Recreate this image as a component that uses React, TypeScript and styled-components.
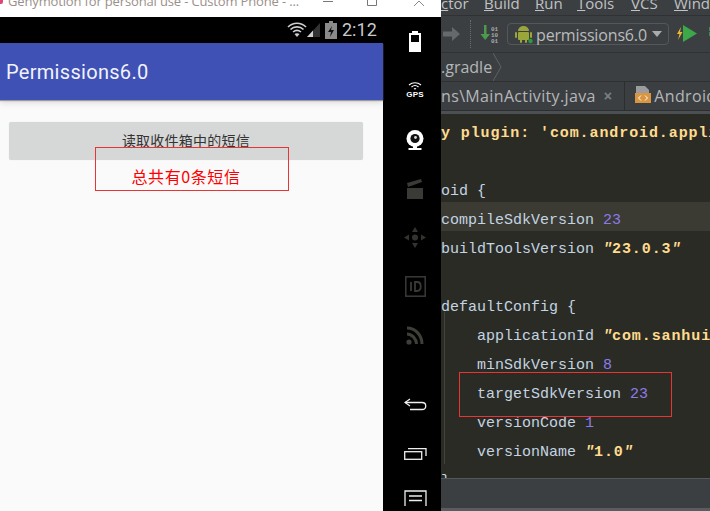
import React from "react";
import styled, { createGlobalStyle } from "styled-components";

const Global = createGlobalStyle`
  html, body { margin: 0; padding: 0; background: #000; }
  #root { width: 710px; height: 511px; overflow: hidden; }
`;
const Page = styled.div`
  position: relative; width: 710px; height: 511px; display: flex; overflow: hidden;
  font-family: Roboto, "Noto Sans CJK SC", sans-serif;
`;
const Emulator = styled.div`width: 441px; height: 511px; display: flex; flex-direction: column; flex: none;`;
const TitleBar = styled.div`
  height: 17px; background: #fff; display: flex; align-items: flex-start; overflow: hidden; flex: none;
`;
const AppMark = styled.div`width: 3px; height: 4px; background: #e0457a; flex: none; border-radius: 0 0 2px 0;`;
const TitleText = styled.div`
  font: 13px/13px "Open Sans", sans-serif; color: #9a8f8a; letter-spacing: -.15px;
  margin: -5px 0 0 5px; white-space: nowrap; width: 300px; flex: none;
`;
const WinButtons = styled.div`display: flex; height: 17px; align-items: flex-start; flex: none;`;
const WinBtn = styled.div<{ $w: number }>`width: ${p => p.$w}px; display: flex; justify-content: center; flex: none;`;
const EmuBody = styled.div`flex: 1; display: flex; min-height: 0;`;
const Phone = styled.div`width: 383px; display: flex; flex-direction: column; background: #fafafa; flex: none;`;
const StatusBar = styled.div`
  height: 26px; background: #000; display: flex; justify-content: flex-end; align-items: center; padding-right: 6px; flex: none;
`;
const Clock = styled.div`font: 18px/26px Roboto, sans-serif; color: #c9c9c9; margin-left: 5px; letter-spacing: .1px;`;
const AppBar = styled.div`
  height: 57px; background: #3f51b5; color: #f2f3fa; font: 20px/59px Roboto, sans-serif; padding-left: 6px; letter-spacing: .3px;
  box-shadow: 0 1px 1px #9c9c9c, 0 3px 6px rgba(0,0,0,.12); flex: none; position: relative;
`;
const Content = styled.div`flex: 1; display: flex; flex-direction: column; padding: 22px 20px 0 9px;`;
const ActionButton = styled.div`
  height: 38px; background: #d6d7d7; border-radius: 2px; box-shadow: 0 0 1px #ddd; color: #333; letter-spacing: .25px;
  font: 14px/36px "Noto Sans CJK SC", sans-serif; text-align: center;
`;
const Count = styled.div`
  margin-top: 4px; color: #f00; font: 400 16px/24px "Noto Sans CJK SC", sans-serif; text-align: center; letter-spacing: .6px;
`;
const Nav = styled.div`width: 58px; background: #000; display: flex; flex-direction: column; flex: none;`;
const NavSlot = styled.div`height: 49px; width: 100%; flex: none; display: flex; align-items: center; justify-content: center; padding-left: 6px; box-sizing: border-box;`;
const NavMenuSlot = styled(NavSlot)`align-items: flex-start; padding-top: 12px;`;
const NavGap = styled.div`height: 20px; flex: none;`;
const GpsLabel = styled.div`font: 700 8px/8px "Liberation Sans", sans-serif; color: #fff; letter-spacing: .2px; text-align: center;`;
const GpsWrap = styled.div`display: flex; flex-direction: column; align-items: center; gap: 1px;`;

const Ide = styled.div`flex: 1; display: flex; flex-direction: column; background: #3c3f41; min-width: 0;`;
const Menu = styled.div`
  height: 15px; overflow: hidden; display: flex; flex: none; border-bottom: 1px solid #2f3133; color: #c0c2c4;
  font: 15px/15px "Open Sans", sans-serif; align-items: flex-end; white-space: nowrap;
`;
const MenuItem = styled.div<{ $w: number }>`width: ${p => p.$w}px; flex: none; margin-bottom: 4px; &::first-letter { text-decoration: underline; }`;
const Toolbar = styled.div`height: 36px; flex: none; display: flex; align-items: center; border-bottom: 1px solid #303234; overflow: hidden; & > * { flex: none; }`;
const Dotted = styled.div`width: 0; height: 28px; border-left: 1px dotted #6a6c6e; margin: 0 9px 0 9px;`;
const RunConfig = styled.div`
  width: 162px; height: 22px; box-sizing: border-box; border: 1px solid #55585a; border-radius: 4px; margin-left: 6px;
  display: flex; align-items: center; padding-left: 6px; color: #b8bbbd; font: 16px/22px "Open Sans", sans-serif;
`;
const RunLabel = styled.span`margin-left: 2px; flex: 1; letter-spacing: -.15px; white-space: nowrap; padding-top: 1px;`;
const Caret = styled.span`width: 0; height: 0; border: 5px solid transparent; border-top: 6px solid #a9acae; border-bottom: 0; margin-right: 6px;`;
const Crumbs = styled.div`
  height: 28px; flex: none; display: flex; align-items: center; color: #b4b7b9; border-bottom: 1px solid #2e3032;
  font: 16px/28px "Open Sans", sans-serif; overflow: hidden;
`;
const Tabs = styled.div`
  height: 28px; flex: none; display: flex; align-items: center; color: #b4b7b9; border-bottom: 1px solid #2c2e30;
  font: 16px/28px "Open Sans", sans-serif; overflow: hidden; white-space: nowrap; letter-spacing: .35px;
  & > * { flex: none; }
`;
const TabClose = styled.span`color: #7d8082; font: 700 14px/28px "Liberation Sans", sans-serif; margin: 0 12px 0 8px;`;
const TabSep = styled.div`width: 1px; height: 28px; background: #2c2e30; margin-right: 10px;`;
const Strip = styled.div`height: 3px; background: #4d5052; flex: none;`;
const Editor = styled.div`
  flex: 1; background: #2b2b25; position: relative; overflow: hidden; padding-top: 1px;
  font: 15px/29px "Liberation Mono", monospace; color: #c3d4e2; white-space: pre;
`;
const CodeLine = styled.div<{ $hl?: boolean; $indent?: number }>`
  height: 29px; padding-left: ${p => p.$indent ?? 0}px; background: ${p => (p.$hl ? "#3b3b33" : "transparent")};
  line-height: 37px;
`;
const Str = styled.span`color: #ffdb8e; font-weight: 700; letter-spacing: .9px;`;
const Quote = styled.span`font-style: italic; font-weight: 700; color: #ffdb8e;`;
const Num = styled.span`color: #8b7bea;`;
const Guide = styled.div`position: absolute; left: 3px; top: 198px; height: 152px; width: 1px; background: #45453f;`;
const IdeBottom = styled.div`height: 33px; flex: none; background: #3c3f41; border-top: 1px solid #55585a; box-sizing: border-box; border-bottom: 3px solid #5a5d5f;`;
const Callout = styled.div<{ $x: number; $y: number; $w: number; $h: number }>`
  position: absolute; left: ${p => p.$x}px; top: ${p => p.$y}px; width: ${p => p.$w}px; height: ${p => p.$h}px;
  box-sizing: border-box; border: 1px solid #e93434; pointer-events: none;
`;

const Wifi = () => (
  <svg width="20" height="18" viewBox="0 0 20 18" fill="none" stroke="#cfcfcf" strokeWidth="1.6">
    <path d="M1 6 C6 1 14 1 19 6" /><path d="M3.5 8.5 C7 5 13 5 16.5 8.5" /><path d="M6 11 C8.5 9 11.5 9 14 11" />
    <path d="M10 16 L7.5 13 C9 12 11 12 12.5 13 Z" fill="#cfcfcf" stroke="none" />
  </svg>
);
const Signal = () => (
  <svg width="14" height="18" viewBox="0 0 14 18"><path d="M0 16 L13 2 V16 Z" fill="#333" /><path d="M0 16 L6 9.5 V16 Z" fill="#cfcfcf" /></svg>
);
const StatusBattery = () => (
  <svg width="12" height="18" viewBox="0 0 12 18" style={{ marginLeft: 4 }}>
    <path d="M4 0 H8 V2 H12 V18 H0 V2 H4 Z" fill="#8a8a8a" /><path d="M7 5 L3 11 H6 L5 16 L9 9 H6 Z" fill="#111" />
  </svg>
);
const Android = () => (
  <svg width="20" height="20" viewBox="0 0 20 20" fill="#9aa53c" style={{ flex: "none" }}>
    <path d="M4 7 A5.5 5 0 0 1 15 7 Z" /><rect x="4" y="8" width="11" height="8" rx="1" />
    <rect x="1" y="8" width="2" height="6" rx="1" /><rect x="16" y="8" width="2" height="6" rx="1" />
    <rect x="6" y="15" width="2" height="4" rx="1" /><rect x="11" y="15" width="2" height="4" rx="1" />
    <circle cx="16.5" cy="17" r="2.2" fill="#2c9a3e" />
  </svg>
);

export default function App() {
  return (
    <Page>
      <Global />
      <Emulator>
        <TitleBar>
          <AppMark />
          <TitleText>Genymotion for personal use - Custom Phone - ...</TitleText>
          <WinButtons>
            <WinBtn $w={40}>
              <svg width="12" height="4" viewBox="0 0 12 4"><path d="M1 1.5 H11" stroke="#777" /></svg>
            </WinBtn>
            <WinBtn $w={48}>
              <svg width="12" height="8" viewBox="0 0 12 8"><path d="M1.5 0 V5.5 H10.5 V0" stroke="#777" fill="none" /></svg>
            </WinBtn>
            <WinBtn $w={45}>
              <svg width="12" height="8" viewBox="0 0 12 8"><path d="M1 6 L6 1 L11 6" stroke="#888" fill="none" /></svg>
            </WinBtn>
          </WinButtons>
        </TitleBar>
        <EmuBody>
          <Phone>
            <StatusBar>
              <Wifi /><Signal /><StatusBattery />
              <Clock>2:12</Clock>
            </StatusBar>
            <AppBar>Permissions6.0</AppBar>
            <Content>
              <ActionButton>读取收件箱中的短信</ActionButton>
              <Count>总共有0条短信</Count>
            </Content>
          </Phone>
          <Nav>
            <NavSlot>
              <svg width="12" height="21" viewBox="0 0 12 21">
                <path d="M3 0 H9 V2 H12 V21 H0 V2 H3 Z" fill="#fff" /><rect x="2" y="4" width="8" height="7" fill="#000" />
              </svg>
            </NavSlot>
            <NavSlot>
              <GpsWrap>
                <svg width="14" height="8" viewBox="0 0 14 8" fill="none" stroke="#fff" strokeWidth="1.1">
                  <path d="M1 3 C4.5 0 9.5 0 13 3" /><path d="M3.5 5 C5.5 3.3 8.5 3.3 10.5 5" /><path d="M6 7 C6.6 6.5 7.4 6.5 8 7" />
                </svg>
                <GpsLabel>GPS</GpsLabel>
              </GpsWrap>
            </NavSlot>
            <NavSlot>
              <svg width="18" height="20" viewBox="0 0 18 20">
                <circle cx="9" cy="8.5" r="8.5" fill="#fff" /><circle cx="9" cy="8.5" r="4.6" fill="#111" /><circle cx="9.5" cy="7.5" r="1.4" fill="#ddd" />
                <rect x="2.5" y="18" width="13" height="2" fill="#fff" /><rect x="7" y="15" width="4" height="3" fill="#fff" />
              </svg>
            </NavSlot>
            <NavSlot>
              <svg width="16" height="20" viewBox="0 0 16 20" fill="#3a3a36">
                <rect x="0" y="9" width="16" height="11" /><path d="M0 4 L14 0 L15 3 L1 8 Z" />
              </svg>
            </NavSlot>
            <NavSlot>
              <svg width="22" height="23" viewBox="0 0 22 23" fill="#333330">
                <circle cx="11" cy="11.5" r="3" /><path d="M11 1 L14 6 H8 Z" /><path d="M11 22 L14 17 H8 Z" /><path d="M0 11.5 L5 8.5 V14.5 Z" /><path d="M22 11.5 L17 8.5 V14.5 Z" />
              </svg>
            </NavSlot>
            <NavSlot>
              <svg width="21" height="21" viewBox="0 0 21 21" fill="none" stroke="#3a3a36" strokeWidth="1.5">
                <rect x=".8" y=".8" width="19.4" height="19.4" /><path d="M6 6 V15" strokeWidth="1.8" /><path d="M10 6 V15 H12 C17 15 17 6 12 6 Z" strokeWidth="1.8" />
              </svg>
            </NavSlot>
            <NavSlot>
              <svg width="18" height="19" viewBox="0 0 18 19" fill="none" stroke="#3f3f3a" strokeWidth="3">
                <path d="M1 2 C9 2 16 9 16 18" /><path d="M1 8 C6 8 10.5 13 10.5 18" /><circle cx="3" cy="16" r="2.6" fill="#3f3f3a" stroke="none" />
              </svg>
            </NavSlot>
            <NavGap />
            <NavSlot>
              <svg width="23" height="13" viewBox="0 0 23 13" fill="none" stroke="#eee" strokeWidth="1.3">
                <path d="M6 1 L1 4.5 L6 8" /><path d="M1 4.5 H18 C23 4.5 23 11.5 18 11.5 H6" />
              </svg>
            </NavSlot>
            <NavSlot>
              <svg width="23" height="13" viewBox="0 0 23 13" fill="none" stroke="#eee" strokeWidth="1.3">
                <rect x=".7" y="4.7" width="17" height="7.6" /><path d="M4 1.7 H22 V9" />
              </svg>
            </NavSlot>
            <NavMenuSlot>
              <svg width="23" height="16" viewBox="0 0 23 16" fill="none" stroke="#eee" strokeWidth="1.3">
                <path d="M1 16 V1 H22 V16" /><path d="M5 6 H18 M5 10.5 H18" strokeWidth="1.6" />
              </svg>
            </NavMenuSlot>
          </Nav>
        </EmuBody>
      </Emulator>
      <Ide>
        <Menu>
          <MenuItem $w={43}>ctor</MenuItem>
          <MenuItem $w={51}>Build</MenuItem>
          <MenuItem $w={42}>Run</MenuItem>
          <MenuItem $w={54}>Tools</MenuItem>
          <MenuItem $w={43}>VCS</MenuItem>
          <MenuItem $w={40}>Windo</MenuItem>
        </Menu>
        <Toolbar>
          <svg width="18" height="16" viewBox="0 0 18 16" style={{ marginLeft: 2 }} fill="#66696b">
            <path d="M0 5.5 H9 V1 L17 8 L9 15 V10.5 H0 Z" />
          </svg>
          <Dotted />
          <svg width="21" height="20" viewBox="0 0 21 20">
            <path d="M4 1 H6.5 V10 H10 L5.2 16 L0.5 10 H4 Z" fill="#4c9a4e" />
            <text x="11" y="7" fontSize="6" fontFamily="Liberation Mono" fontWeight="700" fill="#a8abad">01</text>
            <text x="11" y="13" fontSize="6" fontFamily="Liberation Mono" fontWeight="700" fill="#a8abad">10</text>
            <text x="11" y="19" fontSize="6" fontFamily="Liberation Mono" fontWeight="700" fill="#a8abad">01</text>
          </svg>
          <RunConfig>
            <Android />
            <RunLabel>permissions6.0</RunLabel>
            <Caret />
          </RunConfig>
          <svg width="22" height="20" viewBox="0 0 22 20" style={{ marginLeft: 7 }}>
            <path d="M5 3 L1 10 H3.5 L2 16 L6.5 8 H4 Z" fill="#e8b830" /><path d="M7 1 L21 9.5 L7 18 Z" fill="#3ca84a" />
          </svg>
          <svg width="4" height="14" viewBox="0 0 4 14" style={{ marginLeft: 11 }}>
            <rect width="4" height="4" fill="#3a8a55" /><rect y="5" width="4" height="4" fill="#3a8a55" />
          </svg>
        </Toolbar>
        <Crumbs>
          .gradle
          <svg width="10" height="28" viewBox="0 0 10 28" style={{ flex: "none", marginLeft: 1 }} fill="none" stroke="#5f6264">
            <path d="M0 0 L8 14 L0 28" />
          </svg>
        </Crumbs>
        <Tabs>
          <span>ns\MainActivity.java</span>
          <TabClose>×</TabClose>
          <TabSep />
          <svg width="16" height="20" viewBox="0 0 16 20" style={{ marginRight: 3 }}>
            <path d="M1 0 H10 L14 4 V8 H1 Z" fill="#9a9c9e" /><rect x="0" y="7" width="16" height="10" fill="#d9953f" />
            <path d="M6 9.5 L3.5 12 L6 14.5 M10 9.5 L12.5 12 L10 14.5" stroke="#fff" fill="none" />
          </svg>
          <span>AndroidManifest.xml</span>
        </Tabs>
        <Strip />
        <Editor>
          <CodeLine><Str>y plugin: 'com.android.application'</Str></CodeLine>
          <CodeLine />
          <CodeLine>oid {"{"}</CodeLine>
          <CodeLine $hl>compileSdkVersion <Num>23</Num></CodeLine>
          <CodeLine>buildToolsVersion <Quote>"</Quote><Str>23.0.3</Str><Quote>"</Quote></CodeLine>
          <CodeLine />
          <CodeLine>defaultConfig {"{"}</CodeLine>
          <CodeLine $indent={36}>applicationId <Quote>"</Quote><Str>com.sanhui.permissions</Str><Quote>"</Quote></CodeLine>
          <CodeLine $indent={36}>minSdkVersion <Num>8</Num></CodeLine>
          <CodeLine $indent={36}>targetSdkVersion <Num>23</Num></CodeLine>
          <CodeLine $indent={36}>versionCode <Num>1</Num></CodeLine>
          <CodeLine $indent={36}>versionName <Quote>"</Quote><Str>1.0</Str><Quote>"</Quote></CodeLine>
          <CodeLine>{"}"}</CodeLine>
          <Guide />
        </Editor>
        <IdeBottom />
      </Ide>
      <Callout $x={95} $y={147} $w={194} $h={44} />
      <Callout $x={459} $y={372} $w={213} $h={45} />
    </Page>
  );
}
